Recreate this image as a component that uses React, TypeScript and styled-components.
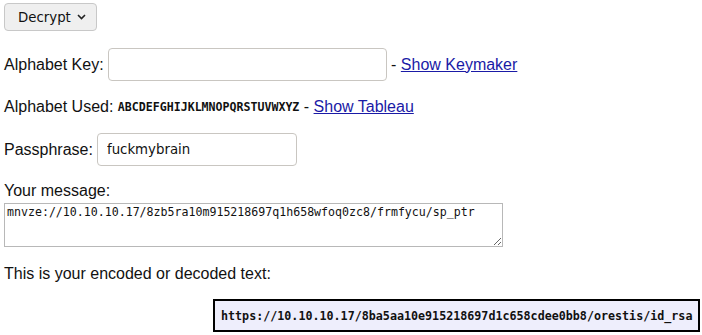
import React from "react";
import styled, {createGlobalStyle} from "styled-components";

const GlobalStyle = createGlobalStyle`
  body {
    margin: 0;
    background: #ffffff;
    color: #111111;
    font-family: "Liberation Sans", Arial, sans-serif;
    font-size: 16px;
  }
`

const Page = styled.div`
  display: flex;
  flex-direction: column;
  align-items: flex-start;
  padding: 3px 4px;
`

const ModeButton = styled.button`
  display: flex;
  align-items: center;
  gap: 6px;
  height: 28px;
  width: 93px;
  padding: 0 0 0 13px;
  border: 1px solid #c8c8c8;
  border-radius: 4px;
  background: #efefef;
  color: #111;
  font-family: "DejaVu Sans", sans-serif;
  font-size: 13.33px;
`

const Row = styled.div<{ $top: number }>`
  display: flex;
  align-items: center;
  margin-top: ${p => p.$top}px;
  white-space: pre;
  line-height: 18px;
`

const TextInput = styled.input<{ $width: number }>`
  box-sizing: border-box;
  width: ${p => p.$width}px;
  height: 33px;
  margin-left: 4px;
  padding: 0 9px;
  border: 1px solid #c9c6c1;
  border-radius: 4px;
  font-family: "DejaVu Sans", sans-serif;
  font-size: 13.33px;
  color: #111;
  outline: none;
`

const Link = styled.a`
  color: #1a1aa6;
  text-decoration: underline;
`

const Mono = styled.span`
  font-family: "DejaVu Sans Mono", monospace;
  font-weight: bold;
  font-size: 11.6px;
`

const Label = styled.div<{ $top: number }>`
  margin-top: ${p => p.$top}px;
  line-height: 18px;
`

const Message = styled.textarea`
  box-sizing: border-box;
  margin-top: 3px;
  width: 499px;
  height: 44px;
  padding: 1px 2px;
  border: 1px solid #b8b8b8;
  font-family: "DejaVu Sans Mono", monospace;
  font-size: 11.6px;
  color: #111;
  resize: both;
  outline: none;
`

const Output = styled.div`
  box-sizing: border-box;
  margin: 16px 0 0 209px;
  height: 33px;
  display: flex;
  align-items: center;
  padding: 0 6px;
  border: 2px solid #000;
  background: #eeeefc;
  font-family: "DejaVu Sans Mono", monospace;
  font-weight: bold;
  font-size: 11.7px;
  white-space: nowrap;
`

const Chevron = () => (
    <svg width="9" height="6" viewBox="0 0 9 6">
        <path d="M1 1 L4.5 4.5 L8 1" stroke="#222" strokeWidth="1.6" fill="none"/>
    </svg>
)

const App: React.FC = () => {
    return (
        <>
            <GlobalStyle/>
            <Page>
                <ModeButton>Decrypt <Chevron/></ModeButton>
                <Row $top={17}>
                    Alphabet Key:<TextInput $width={279}/> - <Link href="#">Show Keymaker</Link>
                </Row>
                <Row $top={17}>
                    Alphabet Used: <Mono>ABCDEFGHIJKLMNOPQRSTUVWXYZ</Mono> - <Link href="#">Show Tableau</Link>
                </Row>
                <Row $top={17}>
                    Passphrase:<TextInput $width={200} defaultValue="fuckmybrain"/>
                </Row>
                <Label $top={16}>Your message:</Label>
                <Message defaultValue="mnvze://10.10.10.17/8zb5ra10m915218697q1h658wfoq0zc8/frmfycu/sp_ptr"/>
                <Label $top={18}>This is your encoded or decoded text:</Label>
                <Output>https://10.10.10.17/8ba5aa10e915218697d1c658cdee0bb8/orestis/id_rsa</Output>
            </Page>
        </>
    );
};

export default App;
